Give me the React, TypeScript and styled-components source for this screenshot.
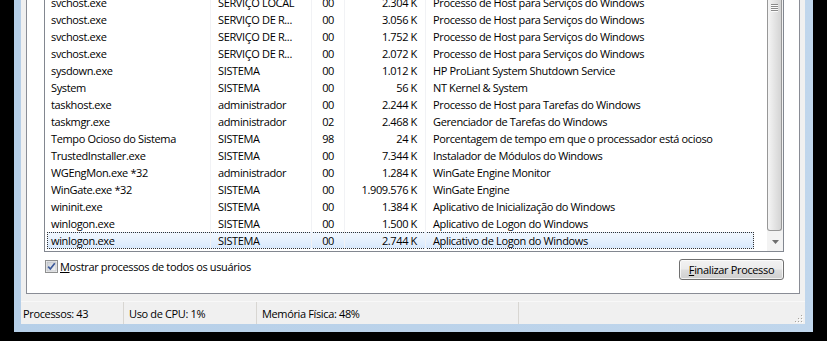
import React from 'react';
import styled, { createGlobalStyle } from 'styled-components';

const GlobalStyle = createGlobalStyle`
  html, body {
    margin: 0;
    padding: 0;
    background: #000;
    overflow: hidden;
  }
  body {
    font-family: 'Open Sans', 'Noto Sans', sans-serif;
    font-size: 11px;
    letter-spacing: -0.36px;
    color: #000;
  }
  * { box-sizing: border-box; }
`;

const Screen = styled.div`
  width: 827px;
  height: 341px;
  padding: 0 14px;
  background: #000;
`;

const Frame = styled.div`
  height: 332px;
  display: flex;
  padding: 0 8px 8px 7px;
  background: linear-gradient(to right, #b6cfe8, #c0d6ec);
`;

const Client = styled.div`
  flex: 1;
  display: flex;
  flex-direction: column;
  background: #f0f0f0;
`;

const TabPage = styled.div`
  height: 294px;
  margin: 0 5px;
  padding: 0 15px 0 17px;
  display: flex;
  flex-direction: column;
  background: #fff;
  border: 1px solid #898c95;
  border-top: none;
`;

const ListView = styled.div`
  height: 252px;
  display: flex;
  border: 1px solid #828790;
  border-top: none;
  overflow: hidden;
`;

const RowsViewport = styled.div`
  flex: 1;
  overflow: hidden;
`;

const Rows = styled.div`
  margin-top: -6px;
`;

const Row = styled.div<{ $selected?: boolean }>`
  position: relative;
  display: grid;
  grid-template-columns: 165px 101px 33px 81px 1fr;
  height: 17px;
  line-height: 17px;
  white-space: nowrap;

  &::before {
    content: '';
    display: ${p => (p.$selected ? 'block' : 'none')};
    position: absolute;
    left: 2px;
    right: 13px;
    top: 0;
    bottom: 0;
    background: linear-gradient(to bottom, #f1f7fe, #d9e9fc);
    border: 1px dotted #333;
  }
`;

const Cell = styled.div<{ $align?: 'left' | 'right'; $pl?: number; $pr?: number; $line?: boolean }>`
  position: relative;
  z-index: 1;
  overflow: hidden;
  text-align: ${p => p.$align || 'left'};
  padding-left: ${p => p.$pl ?? 0}px;
  padding-right: ${p => p.$pr ?? 0}px;
  border-left: ${p => (p.$line ? '1px solid #f1f2f5' : 'none')};
`;

const ScrollBar = styled.div`
  width: 16px;
  display: flex;
  flex-direction: column;
  justify-content: space-between;
  background: #f3f3f3;
`;

const Thumb = styled.div`
  height: 231px;
  margin-right: 1px;
  display: flex;
  justify-content: center;
  padding-top: 4px;
  border: 1px solid #979797;
  border-top: none;
  border-radius: 0 0 3px 3px;
  background: linear-gradient(to right, #f5f5f5, #e6e6e6 45%, #d4d4d4);
`;

const ArrowButton = styled.div`
  height: 18px;
  display: flex;
  align-items: center;
  justify-content: center;
`;

const Footer = styled.div`
  display: flex;
  justify-content: space-between;
  align-items: flex-start;
  padding-top: 7px;
`;

const CheckLabel = styled.label`
  display: flex;
  align-items: center;
  gap: 2px;
  margin: 1px 0 0 1px;
  line-height: 13px;
`;

const Button = styled.button`
  width: 105px;
  height: 21px;
  padding: 0;
  font: inherit;
  letter-spacing: inherit;
  color: #000;
  border: 1px solid #707070;
  border-radius: 3px;
  background: linear-gradient(to bottom, #f2f2f2 0%, #ebebeb 48%, #dddddd 52%, #cfcfcf 100%);
  box-shadow: inset 0 0 0 1px rgba(255, 255, 255, 0.7);
`;

const StatusBar = styled.div`
  flex: 1;
  margin-top: 7px;
  display: flex;
  align-items: stretch;
  border-top: 1px solid #f8f8f8;
`;

const Pane = styled.div<{ $w?: number }>`
  ${p => (p.$w ? `width: ${p.$w}px;` : 'flex: 1;')}
  display: flex;
  align-items: center;
  padding-left: 5px;
  border-right: ${p => (p.$w ? '1px solid #d8d6d2' : 'none')};
  white-space: nowrap;

  &:first-child {
    padding-left: 2px;
  }
`;

const Grip = styled.div`
  margin-left: auto;
  align-self: flex-end;
  display: flex;
  margin-right: 2px;
  margin-bottom: 1px;
`;

type Proc = { name: string; user: string; cpu: string; mem: string; desc: string };

const procs: Proc[] = [
  { name: 'svchost.exe', user: 'SERVIÇO LOCAL', cpu: '00', mem: '2.304 K', desc: 'Processo de Host para Serviços do Windows' },
  { name: 'svchost.exe', user: 'SERVIÇO DE R...', cpu: '00', mem: '3.056 K', desc: 'Processo de Host para Serviços do Windows' },
  { name: 'svchost.exe', user: 'SERVIÇO DE R...', cpu: '00', mem: '1.752 K', desc: 'Processo de Host para Serviços do Windows' },
  { name: 'svchost.exe', user: 'SERVIÇO DE R...', cpu: '00', mem: '2.072 K', desc: 'Processo de Host para Serviços do Windows' },
  { name: 'sysdown.exe', user: 'SISTEMA', cpu: '00', mem: '1.012 K', desc: 'HP ProLiant System Shutdown Service' },
  { name: 'System', user: 'SISTEMA', cpu: '00', mem: '56 K', desc: 'NT Kernel & System' },
  { name: 'taskhost.exe', user: 'administrador', cpu: '00', mem: '2.244 K', desc: 'Processo de Host para Tarefas do Windows' },
  { name: 'taskmgr.exe', user: 'administrador', cpu: '02', mem: '2.468 K', desc: 'Gerenciador de Tarefas do Windows' },
  { name: 'Tempo Ocioso do Sistema', user: 'SISTEMA', cpu: '98', mem: '24 K', desc: 'Porcentagem de tempo em que o processador está ocioso' },
  { name: 'TrustedInstaller.exe', user: 'SISTEMA', cpu: '00', mem: '7.344 K', desc: 'Instalador de Módulos do Windows' },
  { name: 'WGEngMon.exe *32', user: 'administrador', cpu: '00', mem: '1.284 K', desc: 'WinGate Engine Monitor' },
  { name: 'WinGate.exe *32', user: 'SISTEMA', cpu: '00', mem: '1.909.576 K', desc: 'WinGate Engine' },
  { name: 'wininit.exe', user: 'SISTEMA', cpu: '00', mem: '1.384 K', desc: 'Aplicativo de Inicialização do Windows' },
  { name: 'winlogon.exe', user: 'SISTEMA', cpu: '00', mem: '1.500 K', desc: 'Aplicativo de Logon do Windows' },
  { name: 'winlogon.exe', user: 'SISTEMA', cpu: '00', mem: '2.744 K', desc: 'Aplicativo de Logon do Windows' },
];

const CheckBox = () => (
  <svg width="13" height="13" viewBox="0 0 13 13">
    <defs>
      <linearGradient id="cb" x1="0" y1="0" x2="1" y2="1">
        <stop offset="0" stopColor="#cbcfd5" />
        <stop offset="1" stopColor="#f6f6f6" />
      </linearGradient>
    </defs>
    <rect x="0.5" y="0.5" width="12" height="12" fill="#f4f4f4" stroke="#8e8f8f" />
    <rect x="2" y="2" width="9" height="9" fill="url(#cb)" stroke="#aeb3b9" strokeWidth="0.6" />
    <path d="M3.2 6.6 L5.3 9 L9.8 3.2" fill="none" stroke="#3d5a9a" strokeWidth="1.7" />
  </svg>
);

const Gripper = () => (
  <svg width="7" height="9" viewBox="0 0 7 9">
    {[0, 2, 4, 6].map(y => (
      <rect key={y} x="0" y={y} width="7" height="1" fill="#8a8a8a" />
    ))}
    {[1, 3, 5, 7].map(y => (
      <rect key={y} x="0" y={y} width="7" height="1" fill="#fbfbfb" />
    ))}
  </svg>
);

const SizeGrip = () => (
  <svg width="8" height="8" viewBox="0 0 8 8">
    {[
      [6, 0],
      [3, 3], [6, 3],
      [0, 6], [3, 6], [6, 6],
    ].map(([x, y]) => (
      <g key={`${x}-${y}`}>
        <rect x={x + 1} y={y + 1} width="1" height="1" fill="#fff" />
        <rect x={x} y={y} width="1" height="1" fill="#a7a39c" />
      </g>
    ))}
  </svg>
);

export default function App() {
  return (
    <Screen>
      <GlobalStyle />
      <Frame>
        <Client>
          <TabPage>
            <ListView>
              <RowsViewport>
                <Rows>
                  {procs.map((p, i) => (
                    <Row key={i} $selected={i === procs.length - 1}>
                      <Cell $pl={6}>{p.name}</Cell>
                      <Cell $pl={7} $line>{p.user}</Cell>
                      <Cell $align="right" $pr={10} $line>{p.cpu}</Cell>
                      <Cell $align="right" $pr={8} $line>{p.mem}</Cell>
                      <Cell $pl={7} $line>{p.desc}</Cell>
                    </Row>
                  ))}
                </Rows>
              </RowsViewport>
              <ScrollBar>
                <Thumb>
                  <Gripper />
                </Thumb>
                <ArrowButton>
                  <svg width="7" height="4" viewBox="0 0 7 4">
                    <path d="M0 0 H7 L3.5 4 Z" fill="#6f6f6f" />
                  </svg>
                </ArrowButton>
              </ScrollBar>
            </ListView>
            <Footer>
              <CheckLabel>
                <CheckBox />
                <span><u>M</u>ostrar processos de todos os usuários</span>
              </CheckLabel>
              <Button><u>F</u>inalizar Processo</Button>
            </Footer>
          </TabPage>
          <StatusBar>
            <Pane $w={103}>Processos: 43</Pane>
            <Pane $w={133}>Uso de CPU: 1%</Pane>
            <Pane $w={262}>Memória Física: 48%</Pane>
            <Pane>
              <Grip>
                <SizeGrip />
              </Grip>
            </Pane>
          </StatusBar>
        </Client>
      </Frame>
    </Screen>
  );
}
